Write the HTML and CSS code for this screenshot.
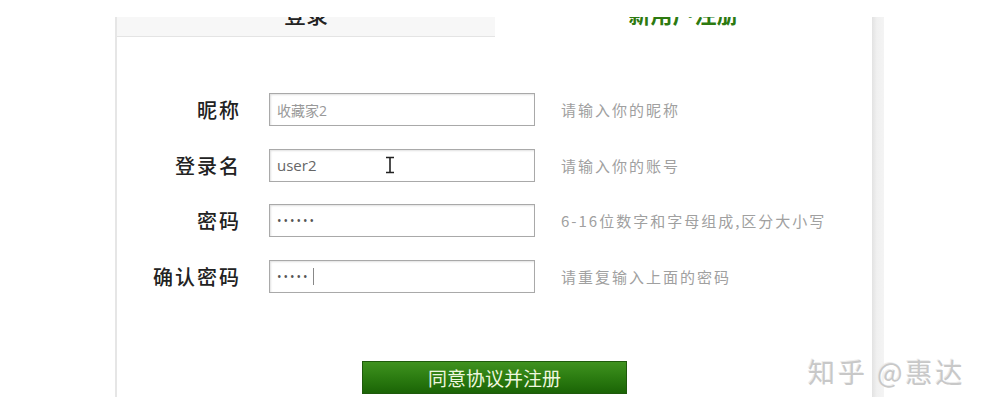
FILE: index.html
```html
<!DOCTYPE html>
<html lang="zh-CN">

<head>
    <meta charset="UTF-8">
    <meta name="viewport" content="width=device-width, initial-scale=1.0">
    <title>新用户注册</title>
    <link rel="stylesheet" href="styles.css">
</head>

<body>
    <div class="frame">
        <main class="panel">
            <div class="tabs">
                <div class="tab tab-login"><span>登录</span></div>
                <div class="tab tab-register"><span>新用户注册</span></div>
            </div>
            <form class="reg-form">
                <div class="row">
                    <label for="nick">昵称</label>
                    <div class="field">
                        <input type="text" id="nick" class="soft" value="收藏家2">
                    </div>
                    <span class="hint">请输入你的昵称</span>
                </div>
                <div class="row">
                    <label for="login">登录名</label>
                    <div class="field">
                        <input type="text" id="login" value="user2">
                        <svg class="ibeam" width="12" height="18" viewBox="0 0 12 18">
                            <path d="M2 1.5h8M2 16.5h8M6 1.5v15" stroke="#222" stroke-width="1.6" fill="none"/>
                        </svg>
                    </div>
                    <span class="hint">请输入你的账号</span>
                </div>
                <div class="row">
                    <label for="pwd">密码</label>
                    <div class="field">
                        <input type="password" id="pwd" value="123456">
                    </div>
                    <span class="hint">6-16位数字和字母组成,区分大小写</span>
                </div>
                <div class="row">
                    <label for="pwd2">确认密码</label>
                    <div class="field">
                        <input type="password" id="pwd2" value="12345">
                        <i class="caret"></i>
                    </div>
                    <span class="hint">请重复输入上面的密码</span>
                </div>
                <div class="actions">
                    <button type="submit">同意协议并注册</button>
                </div>
            </form>
        </main>
        <div class="scrollbar"></div>
    </div>
    <div class="watermark">知乎 @惠达</div>
</body>

</html>
```

FILE: styles.css
```css
body {
    margin: 0;
    padding: 0;
    background-color: #fff;
    font-family: "Noto Sans CJK SC", "Noto Sans", sans-serif;
    height: 411px;
    overflow: hidden;
    position: relative;
}

.frame {
    display: flex;
    margin: 17px 0 0 115px;
    width: 769px;
    height: 380px;
}

.panel {
    flex: 1;
    border-left: 2px solid #e6e6e6;
    display: flex;
    flex-direction: column;
}

.scrollbar {
    width: 12px;
    background: linear-gradient(to right, #e2e2e2, #f0f0f0 40%, #f4f4f4);
}

/* Tabs (top cut off by the window) */
.tabs {
    display: flex;
    height: 20px;
}

.tab {
    overflow: hidden;
    text-align: center;
    font-size: 22px;
    line-height: 22px;
}

.tab span {
    display: block;
    margin-top: -15px;
}

.tab-login {
    width: 378px;
    background-color: #f7f7f7;
    border-bottom: 1px solid #e4e4e4;
    color: #222;
    font-weight: 500;
}

.tab-register {
    flex: 1;
    color: #2d7a10;
    font-weight: bold;
}

/* Form */
.reg-form {
    padding-top: 56px;
    display: flex;
    flex-direction: column;
    gap: 22.5px;
}

.row {
    display: flex;
    align-items: center;
    height: 33px;
}

.row label {
    width: 124px;
    text-align: right;
    font-size: 20px;
    font-weight: 500;
    color: #222;
    margin-right: 28px;
    letter-spacing: 2px;
}

.field {
    position: relative;
}

.field input {
    box-sizing: border-box;
    width: 266px;
    height: 33px;
    border: 1px solid #a9a9a9;
    box-shadow: inset 1px 1px 2px rgba(0, 0, 0, 0.12);
    padding: 0 7px;
    font-family: "Open Sans", "Noto Sans CJK SC", sans-serif;
    font-size: 15px;
    color: #666;
    background: #fff;
    outline: none;
}

.field input.soft {
    color: #999;
    font-size: 14px;
}

.field input[type="password"] {
    font-size: 12px;
    letter-spacing: 2px;
    color: #555;
}

.ibeam {
    position: absolute;
    left: 115px;
    top: 7px;
}

.caret {
    position: absolute;
    left: 44px;
    top: 8px;
    width: 1px;
    height: 17px;
    background: #888;
}

.hint {
    margin-left: 26px;
    font-size: 15px;
    color: #a0a0a0;
    letter-spacing: 2px;
}

.actions {
    margin-top: 46px;
    display: flex;
    justify-content: center;
}

.actions button {
    width: 265px;
    height: 33px;
    border: 1px solid #1f5a0c;
    background: linear-gradient(to bottom, #3f921f, #2a7a10 55%, #1b6406);
    color: #eef7df;
    font-family: "Noto Sans CJK SC", sans-serif;
    font-size: 19px;
    cursor: pointer;
    padding: 0;
}

.watermark {
    position: absolute;
    left: 808px;
    top: 352px;
    font-size: 27px;
    color: #c8c8c8;
    text-shadow: 1px 1px 0 #fff, -1px -1px 0 #ececec;
    letter-spacing: 3px;
    white-space: nowrap;
}
```
